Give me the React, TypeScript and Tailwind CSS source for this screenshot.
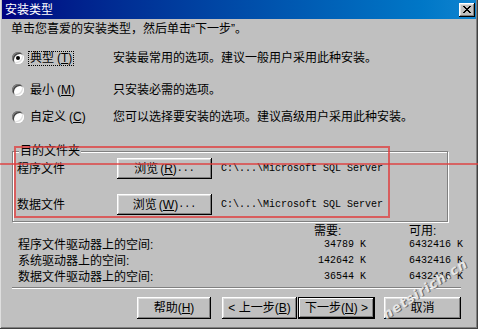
import React from "react";

const btn =
  "flex items-center justify-center bg-[#c0c0c0] shadow-[inset_-1px_-1px_0_#000,inset_1px_1px_0_#fff,inset_-2px_-2px_0_#808080,inset_2px_2px_0_#dfdfdf]";
const btnDefault =
  "flex items-center justify-center bg-[#c0c0c0] shadow-[inset_0_0_0_1px_#000,inset_-2px_-2px_0_#000,inset_2px_2px_0_#fff,inset_-3px_-3px_0_#808080]";

function Radio({ checked }: { checked?: boolean }) {
  return (
    <span className="flex w-[12px] h-[12px] shrink-0 items-center justify-center rounded-full bg-white shadow-[inset_1px_1px_0_#808080,inset_-1px_-1px_0_#fff,inset_2px_2px_0_#404040,inset_-2px_-2px_0_#dfdfdf]">
      {checked && <span className="w-[4px] h-[4px] rounded-full bg-black" />}
    </span>
  );
}

function Key({ k }: { k: string }) {
  return (
    <span>
      (<u className="underline-offset-[1px]">{k}</u>)
    </span>
  );
}

function CloseGlyph() {
  const rows: [number, number][][] = [
    [[0, 2], [6, 8]],
    [[1, 3], [5, 7]],
    [[2, 6]],
    [[3, 5]],
    [[2, 6]],
    [[1, 3], [5, 7]],
    [[0, 2], [6, 8]],
  ];
  return (
    <svg width="8" height="7" viewBox="0 0 8 7" shapeRendering="crispEdges">
      {rows.map((r, y) =>
        r.map(([a, b], i) => <rect key={`${y}-${i}`} x={a} y={y} width={b - a} height={1} fill="#000" />)
      )}
    </svg>
  );
}

const options = [
  { label: "典型", key: "T", desc: "安装最常用的选项。建议一般用户采用此种安装。", checked: true, mt: "mt-[10px]" },
  { label: "最小", key: "M", desc: "只安装必需的选项。", checked: false, mt: "mt-[12px]" },
  { label: "自定义", key: "C", desc: "您可以选择要安装的选项。建议高级用户采用此种安装。", checked: false, mt: "mt-[7px]" },
];

const space = [
  { label: "程序文件驱动器上的空间:", need: "34789 K", free: "6432416 K" },
  { label: "系统驱动器上的空间:", need: "142642 K", free: "6432416 K" },
  { label: "数据文件驱动器上的空间:", need: "36544 K", free: "6432416 K" },
];

export default function App() {
  return (
    <div className="relative w-[478px] h-[329px] overflow-hidden bg-[#c0c0c0] text-black text-[12px] leading-[12px] font-['Liberation_Sans','Noto_Sans_CJK_SC',sans-serif] shadow-[inset_-1px_-1px_0_#404040,inset_1px_0_0_#dfdfdf,inset_-2px_-2px_0_#808080]">
      {/* Title bar */}
      <div className="mx-[2px] h-[19px] flex items-center justify-between pl-[3px] pr-[1px] bg-gradient-to-r from-[#000080] to-[#1084d0]">
        <span className="text-white">安装类型</span>
        <span className={`${btn} w-[16px] h-[14px]`}>
          <CloseGlyph />
        </span>
      </div>

      {/* Instruction */}
      <div className="h-[19px] flex items-center pl-[11px]">单击您喜爱的安装类型，然后单击“下一步”。</div>

      {/* Setup type options */}
      {options.map((o) => (
        <div key={o.key} className={`${o.mt} h-[20px] flex items-center pl-[12px]`}>
          <Radio checked={o.checked} />
          <span className="ml-[4px] w-[85px] shrink-0">
            <span
              className={`inline-flex items-center h-[15px] px-[1px] border border-dotted ${
                o.checked ? "border-black" : "border-transparent"
              }`}
            >
              {o.label} <span className="ml-[3px]"><Key k={o.key} /></span>
            </span>
          </span>
          <span>{o.desc}</span>
        </div>
      ))}

      {/* Destination folder */}
      <fieldset className="mt-[18px] ml-[12px] w-[436px] pl-[4px] pb-[6px] border border-[#808080] shadow-[inset_1px_1px_0_#fff,1px_1px_0_#fff]">
        <legend className="ml-[2px] px-[1px] leading-[12px] bg-[#c0c0c0]">目的文件夹</legend>
        {[
          { label: "程序文件", key: "R", mt: "mt-[1px]" },
          { label: "数据文件", key: "W", mt: "mt-[15px]" },
        ].map((r) => (
          <div key={r.key} className={`${r.mt} h-[21px] flex items-center`}>
            <span className="w-[100px] shrink-0">{r.label}</span>
            <button className={`${btn} w-[95px] h-[21px] shrink-0`}>
              浏览 <span className="ml-[2px]"><Key k={r.key} /></span>
              <span className="font-['Liberation_Mono',monospace] text-[10px]">...</span>
            </button>
            <span className="ml-[9px] font-['Liberation_Mono',monospace] text-[10px]">
              C:\...\Microsoft SQL Server
            </span>
          </div>
        ))}
      </fieldset>

      {/* Disk space */}
      <div className="mt-[3px] h-[12px] flex items-center">
        <span className="w-[314px] shrink-0" />
        <span className="w-[95px] shrink-0">需要:</span>
        <span>可用:</span>
      </div>
      {space.map((s) => (
        <div key={s.label} className="h-[16px] flex items-center">
          <span className="w-[300px] shrink-0 pl-[18px]">{s.label}</span>
          <span className="w-[66px] shrink-0 text-right font-['Liberation_Mono',monospace] text-[10px]">{s.need}</span>
          <span className="ml-[43px] font-['Liberation_Mono',monospace] text-[10px]">{s.free}</span>
        </div>
      ))}

      {/* Separator */}
      <div className="mt-[2px] ml-[12px] w-[449px] border-t border-b border-t-[#808080] border-b-white" />

      {/* Buttons */}
      <div className="mt-[8px] h-[22px] flex pl-[137px]">
        <button className={`${btn} w-[74px] h-[22px]`}>
          帮助<Key k="H" />
        </button>
        <button className={`${btn} ml-[11px] w-[75px] h-[22px]`}>
          &lt; 上一步<Key k="B" />
        </button>
        <button className={`${btnDefault} ml-[1px] w-[77px] h-[22px]`}>
          下一步<Key k="N" />&nbsp;&gt;
        </button>
        <button className={`${btn} ml-[9px] w-[77px] h-[22px]`}>取消</button>
      </div>

      {/* Watermark */}
      <div className="absolute left-[384px] top-[310px] origin-left -rotate-[33deg] italic font-bold text-[13px] tracking-[1px] text-[#e6e6e6] [text-shadow:1px_1px_0_#6a6a6a] font-['DejaVu_Sans',sans-serif] pointer-events-none">
        netsirich.cn
      </div>

      {/* Red annotation marks */}
      <div className="absolute left-[14px] top-[146px] w-[376px] h-[72px] border-2 border-[#e03c3c]/75 pointer-events-none" />
      <div className="absolute left-0 top-[163px] w-full h-[2px] bg-[#e03c3c]/70 pointer-events-none" />
    </div>
  );
}
